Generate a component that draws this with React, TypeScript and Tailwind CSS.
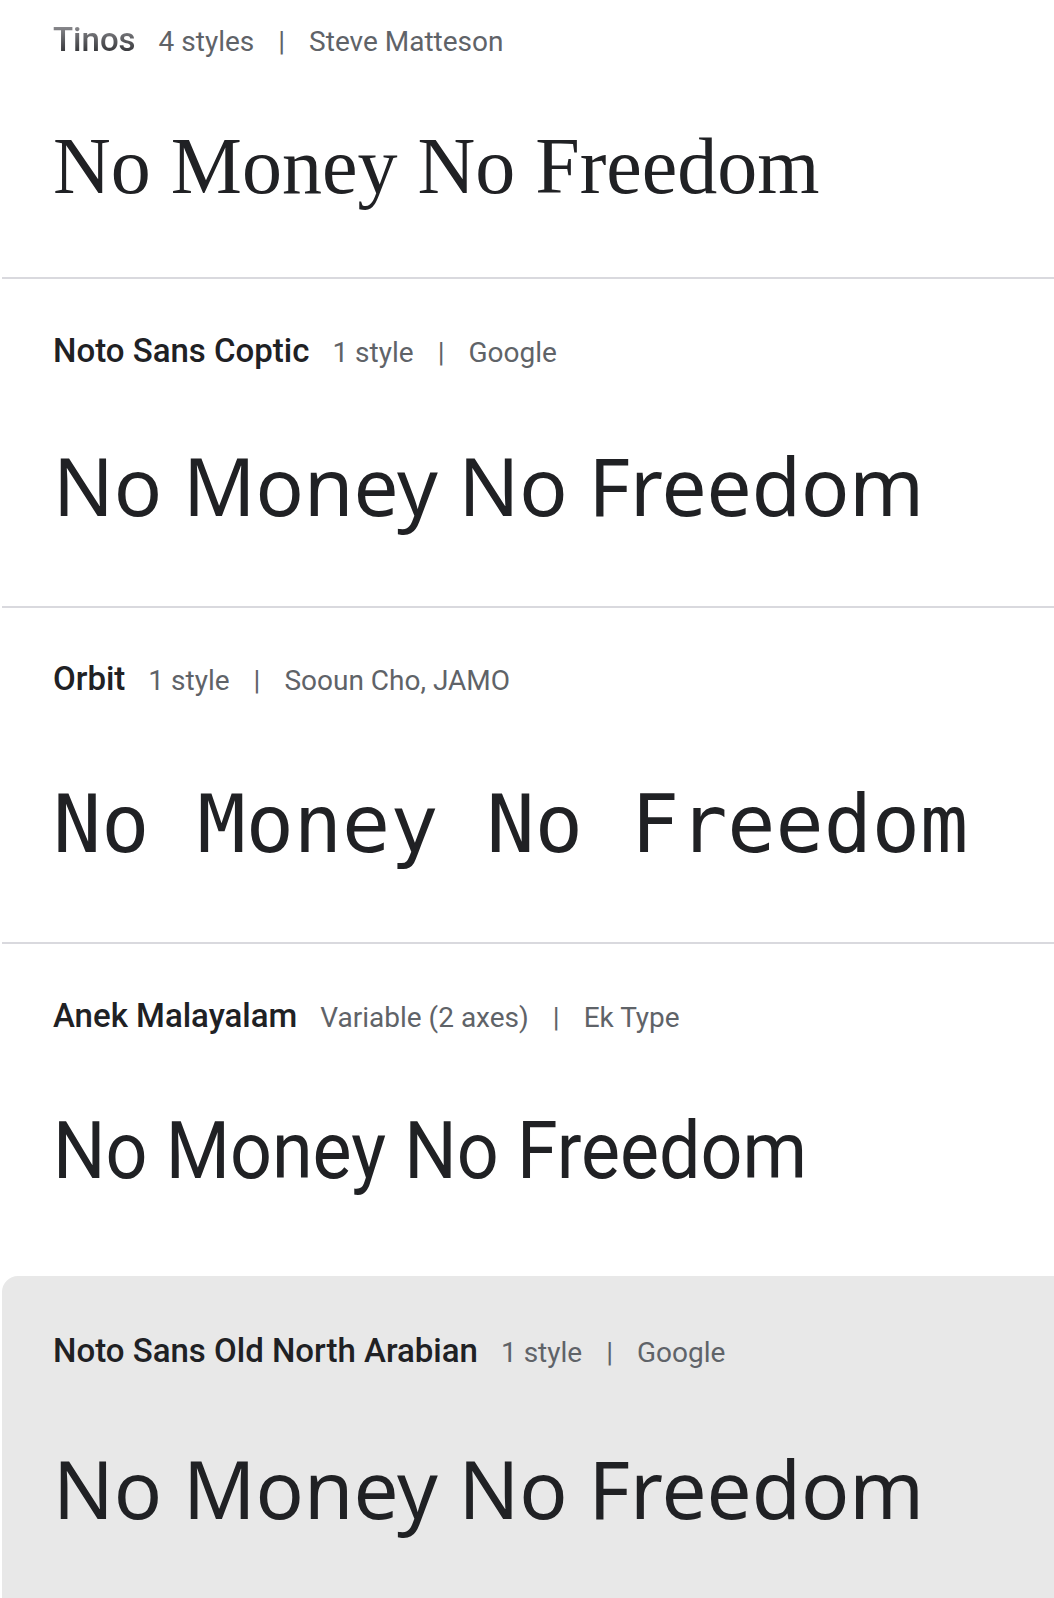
import React from "react";

type Row = {
  name: string;
  meta: string;
  author: string;
  previewFont: string;
  previewClass: string;
  rowClass: string;
  fadeName?: boolean;
};

const rows: Row[] = [
  {
    name: "Tinos",
    meta: "4 styles",
    author: "Steve Matteson",
    previewFont: "font-['Liberation_Serif',Tinos,serif]",
    previewClass: "mt-[61px]",
    rowClass: "pt-[20px] pb-[65px] border-b-2 border-[#d9d9de]",
    fadeName: true,
  },
  {
    name: "Noto Sans Coptic",
    meta: "1 style",
    author: "Google",
    previewFont: "font-['Noto_Sans',sans-serif]",
    previewClass: "mt-[59px]",
    rowClass: "pt-[52px] pb-[67px] border-b-2 border-[#d9d9de]",
  },
  {
    name: "Orbit",
    meta: "1 style",
    author: "Sooun Cho, JAMO",
    previewFont: "font-['DejaVu_Sans_Mono',monospace]",
    previewClass: "mt-[79px]",
    rowClass: "pt-[51px] pb-[71px] border-b-2 border-[#d9d9de]",
  },
  {
    name: "Anek Malayalam",
    meta: "Variable (2 axes)",
    author: "Ek Type",
    previewFont: "font-['Roboto',sans-serif] origin-left scale-x-92",
    previewClass: "mt-[68px]",
    rowClass: "pt-[52px] pb-[78px]",
  },
  {
    name: "Noto Sans Old North Arabian",
    meta: "1 style",
    author: "Google",
    previewFont: "font-['Noto_Sans',sans-serif]",
    previewClass: "mt-[62px]",
    rowClass: "pt-[55px] pb-[80px] bg-[#e8e8e8] rounded-tl-[16px]",
  },
];

function FontRow({ row }: { row: Row }) {
  return (
    <div className={`pl-[51px] pr-4 ${row.rowClass}`}>
      {/* Family header */}
      <div className="flex items-baseline h-[40px] leading-[40px] font-['Roboto',sans-serif] whitespace-nowrap">
        <span
          className={
            row.fadeName
              ? "text-[33px] font-medium bg-linear-to-b from-[#a0a0a4] to-[#202124] bg-clip-text text-transparent"
              : "text-[33px] font-medium text-[#202124]"
          }
        >
          {row.name}
        </span>
        <span className="ml-[23px] text-[28px] text-[#5f6368]">{row.meta}</span>
        <span className="mx-[24px] text-[28px] text-[#5f6368]">|</span>
        <span className="text-[28px] text-[#5f6368]">{row.author}</span>
      </div>

      {/* Preview */}
      <div
        className={`${row.previewClass} ${row.previewFont} text-[80px] leading-[normal] text-[#202124] whitespace-nowrap`}
      >
        No Money No Freedom
      </div>
    </div>
  );
}

export default function App() {
  return (
    <div className="w-[1054px] h-[1598px] overflow-hidden bg-white">
      <div className="ml-[2px]">
        {rows.map((row) => (
          <FontRow key={row.name} row={row} />
        ))}
      </div>
    </div>
  );
}
